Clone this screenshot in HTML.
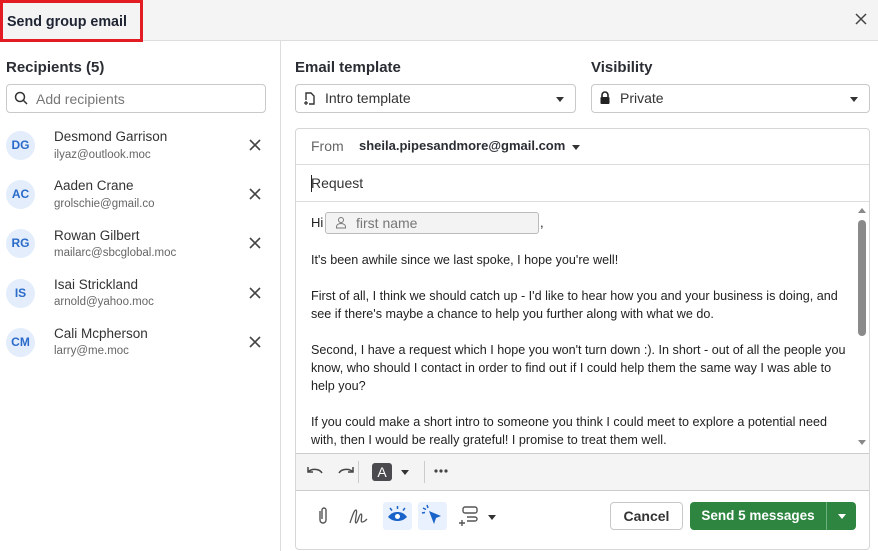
<!DOCTYPE html>
<html><head><style>
*{box-sizing:border-box;margin:0;padding:0}
body{width:878px;height:551px;background:#fff;font-family:"Liberation Sans",Arial,sans-serif;color:#222;position:relative;overflow:hidden}
.a{position:absolute}
.hdr{left:0;top:0;width:878px;height:41px;background:#f4f4f4;border-bottom:1px solid #ddd}
.title{left:0;top:0;width:143px;height:42px;border:3px solid #e31b23;font-size:14.3px;font-weight:bold;padding:11px 0 0 4px;color:#1f2433}
.lbl{font-size:15px;font-weight:bold;color:#2a2d33}
.inp{border:1px solid #c9c9c9;border-radius:4px;background:#fff;font-size:14px}
.av{width:29px;height:29px;border-radius:50%;background:#e3edfb;color:#2a6bc9;font-size:12px;font-weight:bold;text-align:center;line-height:29px}
.nm{font-size:13.5px;color:#333}
.em{font-size:11.5px;color:#666}
.body p{font-size:12.6px;line-height:18px;color:#222;margin-bottom:18px}
.caret{width:0;height:0;border-left:4px solid transparent;border-right:4px solid transparent;border-top:5px solid #333}
</style></head><body>
<div class="a hdr"></div>
<div class="a title">Send group email</div>
<svg class="a" style="left:855px;top:13px" width="12" height="12" viewBox="0 0 12 12"><path d="M1 1l10 10M11 1L1 11" stroke="#444" stroke-width="1.5"/></svg>
<div class="a" style="left:280px;top:41px;width:1px;height:510px;background:#ddd"></div>

<div class="a lbl" style="left:6px;top:59px">Recipients (5)</div>
<div class="a inp" style="left:6px;top:84px;width:260px;height:29px"></div>
<svg class="a" style="left:14px;top:91px" width="15" height="15" viewBox="0 0 15 15"><circle cx="6" cy="6" r="4.5" stroke="#333" stroke-width="1.5" fill="none"/><path d="M9.5 9.5L13 13" stroke="#333" stroke-width="1.5"/></svg>
<div class="a" style="left:36px;top:91px;font-size:14px;color:#777">Add recipients</div>

<div class="a av" style="left:6px;top:131px">DG</div><div class="a nm" style="left:54px;top:129px">Desmond Garrison</div><div class="a em" style="left:54px;top:149px">ilyaz@outlook.moc</div>
<div class="a av" style="left:6px;top:180px">AC</div><div class="a nm" style="left:54px;top:178px">Aaden Crane</div><div class="a em" style="left:54px;top:198px">grolschie@gmail.co</div>
<div class="a av" style="left:6px;top:229px">RG</div><div class="a nm" style="left:54px;top:228px">Rowan Gilbert</div><div class="a em" style="left:54px;top:247px">mailarc@sbcglobal.moc</div>
<div class="a av" style="left:6px;top:279px">IS</div><div class="a nm" style="left:54px;top:277px">Isai Strickland</div><div class="a em" style="left:54px;top:296px">arnold@yahoo.moc</div>
<div class="a av" style="left:6px;top:328px">CM</div><div class="a nm" style="left:54px;top:326px">Cali Mcpherson</div><div class="a em" style="left:54px;top:345px">larry@me.moc</div>
<svg class="a" style="left:249px;top:139px" width="12" height="212" viewBox="0 0 12 212"><g stroke="#444" stroke-width="1.6"><path d="M1 1l10 10M11 1L1 11"/><path d="M1 50l10 10M11 50L1 60"/><path d="M1 99l10 10M11 99L1 109"/><path d="M1 149l10 10M11 149L1 159"/><path d="M1 198l10 10M11 198L1 208"/></g></svg>

<div class="a lbl" style="left:295px;top:59px">Email template</div>
<div class="a lbl" style="left:591px;top:59px">Visibility</div>
<div class="a inp" style="left:295px;top:84px;width:281px;height:29px"></div>
<svg class="a" style="left:303px;top:91px" width="13" height="15" viewBox="0 0 13 15"><path d="M3 9V2h5l3 3v8H6" stroke="#333" stroke-width="1.4" fill="none"/><path d="M1 12h4M3 10v4" stroke="#333" stroke-width="1.3"/></svg>
<div class="a" style="left:325px;top:90px;font-size:14px;color:#333">Intro template</div>
<div class="a caret" style="left:556px;top:97px"></div>
<div class="a inp" style="left:591px;top:84px;width:279px;height:29px"></div>
<svg class="a" style="left:599px;top:90px" width="12" height="15" viewBox="0 0 12 15"><path d="M3 7V5a3 3 0 016 0v2" stroke="#222" stroke-width="1.6" fill="none"/><rect x="1.5" y="7" width="9" height="7" rx="1" fill="#222"/></svg>
<div class="a" style="left:620px;top:90px;font-size:14px;color:#333">Private</div>
<div class="a caret" style="left:850px;top:97px"></div>

<div class="a" style="left:295px;top:128px;width:575px;height:422px;border:1px solid #d6d6d6;border-radius:4px"></div>
<div class="a" style="left:311px;top:138px;font-size:14px;color:#666">From</div>
<div class="a" style="left:359px;top:138px;font-size:13px;font-weight:bold;color:#2a2d33">sheila.pipesandmore@gmail.com</div>
<div class="a caret" style="left:572px;top:145px"></div>
<div class="a" style="left:296px;top:164px;width:573px;height:1px;background:#ddd"></div>
<div class="a" style="left:311px;top:175px;font-size:14px;color:#333">Request</div>
<div class="a" style="left:311px;top:175px;width:1px;height:17px;background:#222"></div>
<div class="a" style="left:296px;top:201px;width:573px;height:1px;background:#ddd"></div>

<div class="a" style="left:311px;top:215px;font-size:13px">Hi</div>
<div class="a" style="left:325px;top:212px;width:214px;height:22px;border:1px solid #bbb;border-radius:3px;background:#f3f3f3"></div>
<svg class="a" style="left:335px;top:216px" width="12" height="13" viewBox="0 0 12 13"><circle cx="6" cy="4" r="2.5" stroke="#777" fill="none"/><path d="M1.5 12v-1.5a4.5 3 0 019 0V12z" stroke="#777" fill="none"/></svg>
<div class="a" style="left:356px;top:215px;font-size:14px;color:#777">first name</div>
<div class="a" style="left:540px;top:215px;font-size:13px">,</div>
<div class="a body" style="left:311px;top:251px;width:540px">
<p>It's been awhile since we last spoke, I hope you're well!</p>
<p>First of all, I think we should catch up - I'd like to hear how you and your business is doing, and see if there's maybe a chance to help you further along with what we do.</p>
<p>Second, I have a request which I hope you won't turn down :). In short - out of all the people you know, who should I contact in order to find out if I could help them the same way I was able to help you?</p>
<p>If you could make a short intro to someone you think I could meet to explore a potential need with, then I would be really grateful! I promise to treat them well.</p>
</div>
<div class="a" style="left:858px;top:208px;width:0;height:0;border-left:4px solid transparent;border-right:4px solid transparent;border-bottom:5px solid #888"></div>
<div class="a" style="left:858px;top:220px;width:8px;height:116px;border-radius:4px;background:#8a8a8a"></div>
<div class="a" style="left:858px;top:440px;width:0;height:0;border-left:4px solid transparent;border-right:4px solid transparent;border-top:5px solid #888"></div>

<div class="a" style="left:296px;top:453px;width:573px;height:38px;background:#f4f4f4;border-top:1px solid #ccc;border-bottom:1px solid #ccc"></div>
<svg class="a" style="left:304px;top:463px" width="22" height="16" viewBox="0 0 22 16"><path d="M4 4v5h5" stroke="#444" stroke-width="1.5" fill="none"/><path d="M4 9a8 6 0 0114 1" stroke="#444" stroke-width="1.5" fill="none"/></svg>
<svg class="a" style="left:335px;top:463px" width="22" height="16" viewBox="0 0 22 16"><path d="M18 4v5h-5" stroke="#444" stroke-width="1.5" fill="none"/><path d="M18 9a8 6 0 00-14 1" stroke="#444" stroke-width="1.5" fill="none"/></svg>
<div class="a" style="left:358px;top:461px;width:1px;height:22px;background:#ccc"></div>
<div class="a" style="left:372px;top:463px;width:20px;height:18px;border-radius:3px;background:#4a4a4f;color:#fff;font-size:14px;text-align:center;line-height:18px">A</div>
<div class="a caret" style="left:401px;top:470px"></div>
<div class="a" style="left:424px;top:461px;width:1px;height:22px;background:#ccc"></div>
<svg class="a" style="left:434px;top:469px" width="14" height="4" viewBox="0 0 14 4"><circle cx="2" cy="2" r="1.6" fill="#444"/><circle cx="7" cy="2" r="1.6" fill="#444"/><circle cx="12" cy="2" r="1.6" fill="#444"/></svg>

<svg class="a" style="left:316px;top:506px" width="14" height="20" viewBox="0 0 14 20"><path d="M4 5v9a3 3 0 006 0V4a2 2 0 00-4 0v9" stroke="#555" stroke-width="1.4" fill="none"/></svg>
<svg class="a" style="left:348px;top:507px" width="22" height="18" viewBox="0 0 22 18"><path d="M2 16C4 10 6 3 8 3s-2 13 0 13 3-9 5-9-1 8 1 8 3-1 5-3" stroke="#555" stroke-width="1.3" fill="none"/></svg>
<div class="a" style="left:383px;top:502px;width:29px;height:28px;background:#e8f1fd;border-radius:3px"></div>
<svg class="a" style="left:385px;top:505px" width="25" height="20" viewBox="0 0 25 20"><path d="M3 12c3-4 6-5 9.5-5S19 8 22 12c-3 3-6 4-9.5 4S6 15 3 12z" fill="#1a63c9"/><circle cx="12.5" cy="11.5" r="2.5" fill="#fff"/><path d="M12.5 1v3M5 3l2 2.5M20 3l-2 2.5" stroke="#1a63c9" stroke-width="1.5"/></svg>
<div class="a" style="left:418px;top:502px;width:29px;height:28px;background:#e8f1fd;border-radius:3px"></div>
<svg class="a" style="left:420px;top:503px" width="25" height="24" viewBox="0 0 25 24"><path d="M9 8l12 5-5 2-2 6z" fill="#1a63c9"/><path d="M7 2l1 3M3 5l3 1.5M2 10l3-0.5" stroke="#1a63c9" stroke-width="1.5"/></svg>
<svg class="a" style="left:457px;top:505px" width="26" height="22" viewBox="0 0 26 22"><rect x="6" y="2" width="14" height="6" rx="2" stroke="#555" stroke-width="1.4" fill="none"/><path d="M10 12h8a2 2 0 010 4h-8" stroke="#555" stroke-width="1.4" fill="none"/><path d="M2 18h6M5 15v6" stroke="#555" stroke-width="1.4"/></svg>
<div class="a caret" style="left:488px;top:515px"></div>

<div class="a" style="left:610px;top:502px;width:73px;height:28px;border:1px solid #c8c8c8;border-radius:4px;font-size:14px;font-weight:bold;color:#333;text-align:center;line-height:26px">Cancel</div>
<div class="a" style="left:690px;top:502px;width:166px;height:28px;background:#2d8540;border-radius:4px"></div>
<div class="a" style="left:690px;top:502px;width:136px;height:28px;font-size:13.5px;font-weight:bold;color:#fff;text-align:center;line-height:28px">Send 5 messages</div>
<div class="a" style="left:826px;top:502px;width:1px;height:28px;background:#6fae7e"></div>
<div class="a" style="left:838px;top:514px;width:0;height:0;border-left:4px solid transparent;border-right:4px solid transparent;border-top:5px solid #fff"></div>
</body></html>
